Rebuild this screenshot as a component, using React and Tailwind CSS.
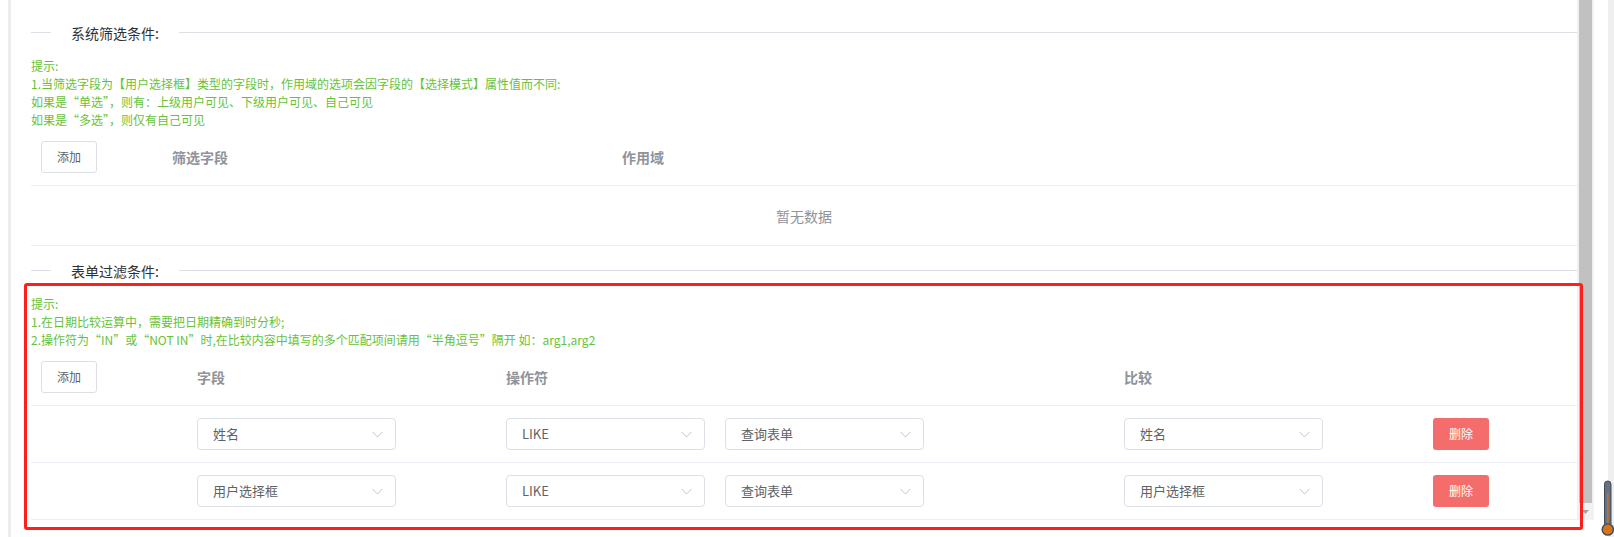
import React from 'react';

// thin "v" arrow used by the select boxes
function Chevron() {
  return (
    <svg width="11" height="7" viewBox="0 0 11 7" fill="none">
      <path d="M0.5 0.8 L5.5 6 L10.5 0.8" stroke="#c0c4cc" strokeWidth="1" />
    </svg>
  );
}

function FakeSelect({ value }) {
  return (
    <div className="flex h-8 w-[199px] items-center justify-between rounded border border-[#dcdfe6] bg-white pl-[15px] pr-[12px] text-[13px] text-[#606266]">
      <span>{value}</span>
      <Chevron />
    </div>
  );
}

function Divider({ title, className }) {
  return (
    <div className={`relative h-px bg-[#dcdfe6] ${className}`}>
      <span className="absolute left-5 top-1/2 -translate-y-1/2 bg-white px-5 text-sm leading-5 font-normal text-[#303133]">
        {title}
      </span>
    </div>
  );
}

function AddButton() {
  return (
    <button className="h-8 w-14 rounded-[3px] border border-[#dcdfe6] bg-white text-xs font-normal text-[#606266]">
      添加
    </button>
  );
}

const rows = [
  { field: '姓名', op: 'LIKE', source: '查询表单', compare: '姓名' },
  { field: '用户选择框', op: 'LIKE', source: '查询表单', compare: '用户选择框' },
];

export default function App() {
  return (
    <div className="flex h-[537px] w-[1614px] overflow-hidden bg-white font-['Microsoft_YaHei','Noto_Sans_CJK_SC',sans-serif]">
      <div className="w-[8px] shrink-0 bg-white" />
      <div className="w-[3px] shrink-0 bg-[#ededed]" />

      {/* main form area */}
      <div className="flex min-w-0 flex-1 flex-col pl-5 pt-[8px]">
        <Divider title="系统筛选条件:" className="my-6" />

        <div className="text-xs leading-[18px] text-[#67c23a]">
          <p>提示:</p>
          <p>1.当筛选字段为【用户选择框】类型的字段时，作用域的选项会因字段的【选择模式】属性值而不同:</p>
          <p>如果是“单选”，则有：上级用户可见、下级用户可见、自己可见</p>
          <p>如果是“多选”，则仅有自己可见</p>
        </div>

        {/* system filter table */}
        <div className="grid grid-cols-[131px_450px_1fr] border-b border-[#ebeef5] text-sm font-bold text-[#909399]">
          <div className="flex items-center px-2.5 py-3"><AddButton /></div>
          <div className="flex items-center px-2.5">筛选字段</div>
          <div className="flex items-center px-2.5">作用域</div>
        </div>
        <div className="flex h-[60px] items-center justify-center border-b border-[#ebeef5] text-sm text-[#909399]">
          暂无数据
        </div>

        <Divider title="表单过滤条件:" className="mt-6 mb-3" />

        {/* form filter section, outlined in red */}
        <div className="relative z-10 -ml-[7px] -mr-[6px] rounded-[3px] border-[3px] border-[#ff1f1a] pb-[7px] pl-[4px] pr-[3px] pt-[9px]">
          <div className="text-xs leading-[18px] text-[#67c23a]">
            <p>提示:</p>
            <p>1.在日期比较运算中，需要把日期精确到时分秒;</p>
            <p>2.操作符为“IN”或“NOT IN”时,在比较内容中填写的多个匹配项间请用“半角逗号”隔开 如：arg1,arg2</p>
          </div>

          <div className="grid grid-cols-[156px_309px_618px_309px_1fr] border-b border-[#ebeef5] text-sm font-bold text-[#909399]">
            <div className="flex items-center px-2.5 py-3"><AddButton /></div>
            <div className="flex items-center px-2.5">字段</div>
            <div className="flex items-center px-2.5">操作符</div>
            <div className="flex items-center px-2.5">比较</div>
            <div />
          </div>

          {rows.map((row, i) => (
            <div
              key={i}
              className="grid grid-cols-[156px_309px_618px_309px_1fr] border-b border-[#ebeef5]"
            >
              <div />
              <div className="flex items-center px-2.5 py-3"><FakeSelect value={row.field} /></div>
              <div className="flex items-center gap-5 px-2.5 py-3">
                <FakeSelect value={row.op} />
                <FakeSelect value={row.source} />
              </div>
              <div className="flex items-center px-2.5 py-3"><FakeSelect value={row.compare} /></div>
              <div className="flex items-center px-2.5 py-3">
                <button className="h-8 w-14 rounded-[3px] bg-[#f56c6c] text-xs text-white">删除</button>
              </div>
            </div>
          ))}
        </div>
      </div>

      {/* inner scrollbar */}
      <div className="flex h-[520px] w-[17px] shrink-0 flex-col bg-[#f1f1f1]">
        <div className="mx-[2px] h-[503px] bg-[#c1c1c1]" />
        <div className="flex flex-1 items-center justify-center">
          <svg width="7" height="4" viewBox="0 0 7 4">
            <path d="M0 0 L7 0 L3.5 4 Z" fill="#a3a3a3" />
          </svg>
        </div>
      </div>

      {/* outer page edge with the thermometer widget */}
      <div className="relative flex w-[20px] shrink-0">
        <div className="w-[14px] bg-white" />
        <div className="flex-1 bg-[#efefef]" />
        <svg
          className="absolute left-[7px] top-[480px]"
          width="14"
          height="57"
          viewBox="0 0 14 57"
        >
          <rect x="3.5" y="1" width="6.5" height="46" rx="3.2" fill="#66727f" stroke="#3f4a55" strokeWidth="1" />
          <rect x="6.2" y="13" width="1.3" height="36" fill="#e0701c" />
          <circle cx="6.8" cy="49.5" r="5.6" fill="#d9731a" stroke="#3f4a55" strokeWidth="1.4" />
        </svg>
      </div>
    </div>
  );
}
